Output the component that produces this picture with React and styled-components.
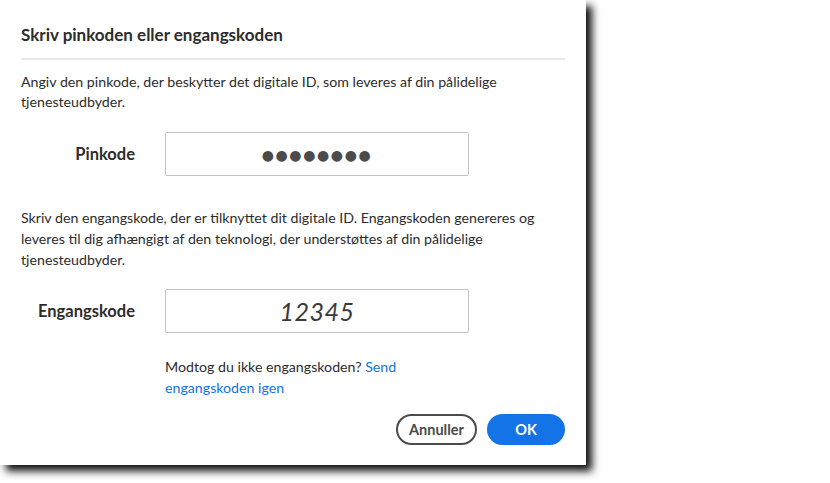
import React from "react";
import styled, { createGlobalStyle } from "styled-components";

const Global = createGlobalStyle`
  html, body {
    margin: 0;
    padding: 0;
    background: #ffffff;
  }
  body {
    min-height: 100vh;
    font-family: Lato, "Liberation Sans", sans-serif;
    color: #2c2c2c;
  }
`;

const Dialog = styled.div`
  width: 586px;
  height: 465px;
  box-sizing: border-box;
  background: #ffffff;
  padding: 20px 21px 0 21px;
  box-shadow: 6px 6px 8px rgba(0, 0, 0, 0.95);
  display: flex;
  flex-direction: column;
`;

const Title = styled.h1`
  margin: 0;
  font-size: 17px;
  font-weight: 700;
  line-height: 30px;
  color: #2c2c2c;
`;

const Divider = styled.hr`
  margin: 8px 0 0 0;
  border: none;
  height: 2px;
  background: #e8e8e8;
`;

const Text = styled.p`
  margin: ${(p) => p.$top}px 0 0 0;
  font-size: 14.2px;
  line-height: ${(p) => p.$lh}px;
`;

const Row = styled.div`
  display: flex;
  align-items: center;
  gap: 30px;
  margin-top: ${(p) => p.$top}px;
`;

const Label = styled.label`
  width: 114px;
  text-align: right;
  font-size: 16.5px;
  font-weight: 700;
`;

const Field = styled.div`
  width: 304px;
  height: 44px;
  box-sizing: border-box;
  border: 1px solid #c4c4c4;
  border-radius: 2px;
  display: flex;
  align-items: center;
  justify-content: center;
`;

const Dots = styled.span`
  font-family: "DejaVu Sans", sans-serif;
  font-size: 14px;
  letter-spacing: 1.6px;
  color: #4b4b4b;
  padding-top: 2px;
`;

const Code = styled.span`
  font-size: 25px;
  font-style: italic;
  color: #3a3a3a;
  letter-spacing: 0.5px;
`;

const Resend = styled.p`
  margin: 23px 0 0 144px;
  width: 250px;
  font-size: 14.2px;
  line-height: 21px;
`;

const Link = styled.a`
  color: #1473e6;
  text-decoration: none;
  cursor: pointer;
`;

const Actions = styled.div`
  display: flex;
  justify-content: flex-end;
  gap: 10px;
  margin-top: 16px;
`;

const Button = styled.button`
  height: 31px;
  width: ${(p) => p.$w}px;
  box-sizing: border-box;
  border-radius: 16px;
  font-family: Lato, "Liberation Sans", sans-serif;
  font-size: 14.5px;
  font-weight: 700;
  padding: 0;
  border: 2px solid ${(p) => (p.$primary ? "#1473e6" : "#4b4b4b")};
  background: ${(p) => (p.$primary ? "#1473e6" : "#ffffff")};
  color: ${(p) => (p.$primary ? "#ffffff" : "#4b4b4b")};
`;

export default function App() {
  return (
    <>
      <Global />
      <Dialog>
        <Title>Skriv pinkoden eller engangskoden</Title>
        <Divider />
        <Text $top={12} $lh={20}>
          Angiv den pinkode, der beskytter det digitale ID, som leveres af din pålidelige
          tjenesteudbyder.
        </Text>
        <Row $top={20}>
          <Label>Pinkode</Label>
          <Field>
            <Dots>●●●●●●●●</Dots>
          </Field>
        </Row>
        <Text $top={31} $lh={21}>
          Skriv den engangskode, der er tilknyttet dit digitale ID. Engangskoden genereres og
          leveres til dig afhængigt af den teknologi, der understøttes af din pålidelige
          tjenesteudbyder.
        </Text>
        <Row $top={19}>
          <Label>Engangskode</Label>
          <Field>
            <Code>12345</Code>
          </Field>
        </Row>
        <Resend>
          <span>Modtog du ikke engangskoden? </span>
          <Link>Send engangskoden igen</Link>
        </Resend>
        <Actions>
          <Button $w={81}>Annuller</Button>
          <Button $w={78} $primary>
            OK
          </Button>
        </Actions>
      </Dialog>
    </>
  );
}
